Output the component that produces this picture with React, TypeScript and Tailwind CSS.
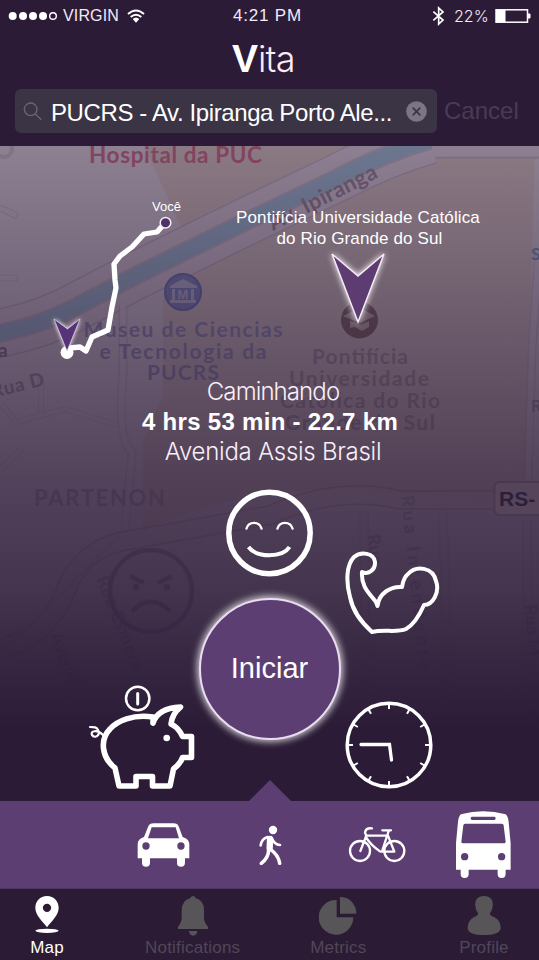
import React from "react";

const LIGHT = "font-['Inter','Liberation_Sans',sans-serif] font-light";

function StatusBar() {
  return (
    <div className="flex h-[31px] items-center px-2 text-[16px] leading-none text-[#f3e9f7]">
      <div className="flex w-[225px] items-center">
        <svg width="50" height="10" viewBox="0 0 50 10" fill="#fff">
          <circle cx="4.7" cy="5" r="4" />
          <circle cx="15" cy="5" r="4" />
          <circle cx="25" cy="5" r="4" />
          <circle cx="35" cy="5" r="4" />
          <circle cx="45" cy="5" r="3.3" fill="none" stroke="#fff" strokeWidth="1.4" />
        </svg>
        <span className="ml-[5px] w-[57px] whitespace-nowrap text-[16px] tracking-[0.15px]">VIRGIN</span>
        <svg className="ml-[7px]" width="18" height="14" viewBox="0 0 54 42" fill="none" stroke="#fff" strokeWidth="6">
          <path d="M3 15Q27 -6 51 15" />
          <path d="M11 24Q27 10 43 24" />
          <path d="M17 30Q27 21 37 30L27 41Z" fill="#fff" stroke="none" />
        </svg>
      </div>
      <span className="w-[72px] whitespace-nowrap text-[17px] tracking-[0.8px]">4:21 PM</span>
      <div className="ml-auto flex items-center">
        <svg width="13" height="20" viewBox="0 0 39 60" fill="none" stroke="#fff" strokeWidth="5">
          <path d="M4 17L33 42L20 54V6L33 18L4 43" />
        </svg>
        <span className={`ml-[9px] w-[35px] whitespace-nowrap text-[16px] ${LIGHT}`}>22%</span>
        <svg className="ml-[6px]" width="36" height="14" viewBox="0 0 36 14">
          <rect x="1" y="0.8" width="31.5" height="12.4" fill="none" stroke="#fff" strokeWidth="1.5" />
          <rect x="1" y="1" width="9.5" height="12" fill="#fff" />
          <path d="M33 4.5h1.5q1 0 1 1v3q0 1-1 1H33z" fill="#fff" />
        </svg>
      </div>
    </div>
  );
}

function Header() {
  return (
    <header className="h-[146px] shrink-0 bg-[#2b1b36]">
      <StatusBar />
      <h1 className={`flex h-[58px] items-center justify-center pr-[12px] pb-[3px] leading-none text-[#fbe9fb] ${LIGHT}`}>
        <span className="font-['Liberation_Sans',sans-serif] text-[39px] font-bold text-white">V</span>
        <span className="w-[37px] text-[36px] tracking-[-0.8px]">ita</span>
      </h1>
      <div className="flex items-center pl-[15px]">
        <div className="flex h-[44px] w-[422px] items-center rounded-[6px] bg-[#3a3445] pr-[10px] pl-[8px]">
          <svg width="20" height="20" viewBox="0 0 60 60" fill="none" stroke="#6b6376" strokeWidth="4">
            <circle cx="23" cy="25" r="19" />
            <path d="M37 39L55 56" />
          </svg>
          <span className="ml-[8px] w-[345px] whitespace-nowrap pt-[4px] text-[24px] tracking-[-0.39px] text-white">
            PUCRS - Av. Ipiranga Porto Ale...
          </span>
          <svg className="ml-auto" width="21" height="21" viewBox="0 0 21 21">
            <circle cx="10.5" cy="10.5" r="10.3" fill="#7b7683" />
            <path d="M6.7 6.7l7.6 7.6M14.3 6.7l-7.6 7.6" stroke="#3a3445" strokeWidth="1.7" />
          </svg>
        </div>
        <span className="ml-[7px] text-[24px] text-[#493b55]">Cancel</span>
      </div>
    </header>
  );
}

const RIVER = "M-5 334Q45 325 83 303L133 277L247 221L337 178Q385 153 430 140";

function MapBackdrop() {
  return (
    <svg
      className="absolute inset-0 h-full w-full"
      viewBox="0 146 539 655"
      fontFamily="'Lato','Liberation Sans',sans-serif"
      fontWeight="700"
    >
      <defs>
        <linearGradient id="shade" x1="0" y1="0" x2="0" y2="1">
          <stop offset="0" stopColor="#2c1b38" stopOpacity="0.49" />
          <stop offset="0.18" stopColor="#2c1b38" stopOpacity="0.6" />
          <stop offset="0.36" stopColor="#2c1b38" stopOpacity="0.71" />
          <stop offset="0.51" stopColor="#2c1b38" stopOpacity="0.8" />
          <stop offset="0.68" stopColor="#2c1b38" stopOpacity="0.875" />
          <stop offset="0.77" stopColor="#2b1b37" stopOpacity="0.93" />
          <stop offset="0.89" stopColor="#2b1b36" stopOpacity="1" />
        </linearGradient>
      </defs>
      <rect y="146" width="539" height="655" fill="#ebe2e8" />
      <path d="M144 146H539V505Q450 495 350 490T143 530V440L163 395V300L184 234Z" fill="#e6d5cc" />
      <path d="M535 146L525 500H539V146Z" fill="#ebe2e6" />
      <g fill="none">
        <path d="M400 158Q420 152 450 152H545" stroke="#cfc0cc" strokeWidth="13" />
        <path d={RIVER} stroke="#cfc0cc" strokeWidth="49" />
        <path d="M400 156Q420 151 450 151H545" stroke="#ebdfe8" strokeWidth="11" />
        <path d={RIVER} stroke="#ebdfe8" strokeWidth="46" />
        <path d={RIVER} stroke="#d2c7d2" strokeWidth="19" />
        <path d={RIVER} stroke="#a9cfe2" strokeWidth="15" />
        <g opacity="0.65">
          <path d="M539 250L532 350L527 510M123 305V375Q117 440 132 452L125 530" stroke="#cfc0cc" strokeWidth="9" />
          <path d="M539 250L532 350L527 510M123 305V375Q117 440 132 452L125 530" stroke="#efe5ec" strokeWidth="6" />
          <path d="M0 402L16 422L65 409L117 425M41 375V416M0 470L22 448" stroke="#cdbfcd" strokeWidth="6" />
          <path d="M0 402L16 422L65 409L117 425M41 375V416M0 470L22 448" stroke="#ece2e9" strokeWidth="4" />
          <path d="M0 208L15 215M0 278H15" stroke="#cbbccb" strokeWidth="7" strokeLinecap="round" />
          <path d="M0 208L15 215M0 278H15" stroke="#e9dfe8" strokeWidth="5" strokeLinecap="round" />
          <circle cx="4" cy="149" r="8" stroke="#cbbccb" strokeWidth="4" />
        </g>
        <g opacity="0.4">
          <path d="M-5 650Q50 640 70 580Q90 545 130 540L270 515Q340 485 400 500H500" stroke="#b8807f" strokeWidth="20" />
          <path d="M-5 650Q50 640 70 580Q90 545 130 540L270 515Q340 485 400 500H500" stroke="#ecd6d2" strokeWidth="17" />
          <path d="M364 510L366 700M443 510L448 700M527 510V760" stroke="#c4b4c4" strokeWidth="10" />
          <path d="M364 510L366 700M443 510L448 700M527 510V760" stroke="#e7dde5" strokeWidth="7" />
          <path d="M0 655L70 585L120 535M50 630L70 700" stroke="#cbb9c4" strokeWidth="3" />
        </g>
      </g>
      <circle cx="183" cy="292" r="18" fill="#8292cd" stroke="#6a7bc0" strokeWidth="2" />
      <g fill="#cbcde6">
        <path d="M170 286L183 279L197 286V288H170ZM170 300H196V303H170ZM172 289H175V300H172ZM191 289H194V300H191Z" />
      </g>
      <text x="177.5" y="299" fontSize="13" fill="#cbcde6" fontFamily="'Liberation Sans',sans-serif">M</text>
      <circle cx="359.500" cy="320" r="18.5" fill="#866b60" />
      <path d="M343 316L360 308L375 316L360 323ZM350 321V328L355 327L362 331L369 327V321L361 325Z" fill="#d6beb9" />
      <text x="89" y="163" fontSize="22.500" textLength="173" fill="#d86c84">Hospital da PUC</text>
      <g fontSize="21" fill="#9a9bc4" textAnchor="middle">
        <text x="183" y="337" textLength="199">Museu de Ciencias</text>
        <text x="183" y="359" textLength="167">e Tecnologia da</text>
        <text x="183" y="380" textLength="72">PUCRS</text>
      </g>
      <g fontSize="21" fill="#b2a0a5" textAnchor="middle">
        <text x="360" y="364" textLength="96">Pontifícia</text>
        <text x="359" y="386" textLength="140">Universidade</text>
        <text x="360" y="408" textLength="160">Católica do Rio</text>
        <text x="360" y="430" textLength="150">Grande do Sul</text>
      </g>
      <text transform="translate(273 231) rotate(-27)" fontSize="22" textLength="119" fill="#a08e9a">Av. Ipiranga</text>
      <text x="-2" y="357" fontSize="19" fill="#8e7b88">a</text>
      <text transform="translate(-7 398) rotate(-14)" fontSize="19" textLength="54" fill="#a99aa5">Rua D</text>
      <text x="34" y="506" fontSize="22" textLength="131" fill="#bcadbb">PARTENON</text>
      <text x="531" y="412" fontSize="17" fill="#a99aa5">R</text>
      <text x="531" y="260" fontSize="17" fill="#7fa3c4">S</text>
      <g fill="#c2b4c1" fontSize="18">
        <text transform="translate(401 496) rotate(84)" textLength="175">Rua Intendente</text>
        <text transform="translate(367 535) rotate(82)">Rua</text>
        <text transform="translate(96 579) rotate(68)" textLength="100">Rua Esmera</text>
        <text transform="translate(50 635) rotate(68)">Avenida</text>
        <text transform="translate(524 605) rotate(84)">Rua M</text>
      </g>
      <g fill="none" stroke="#b3a4b6" strokeWidth="4.500">
        <circle cx="151" cy="591" r="41" />
        <path d="M130 576L144 583M172 576L158 583M132 611Q151 592 170 611" />
      </g>
      <circle cx="136" cy="587" r="3.2" fill="#b3a4b6" />
      <circle cx="167" cy="587" r="3.2" fill="#b3a4b6" />
      <rect y="146" width="539" height="655" fill="url(#shade)" />
      <rect x="494.500" y="482" width="60" height="33" rx="5" fill="#56445b" stroke="#4a3850" strokeWidth="2" />
      <text x="499" y="506" fontSize="21" fill="#2c1f38" fontFamily="'Liberation Sans',sans-serif">RS-</text>
    </svg>
  );
}

function Route() {
  return (
    <div className="w-[200px] pt-[54px]">
      <p className="w-full pl-[152px] text-[13px] leading-[14px] text-white">Você</p>
      <svg className="ml-[45px]" width="135" height="150" viewBox="45 214 135 150">
        <path
          d="M165 223L157 232L144 234L132 247L120 256L114 264L115 280L116 288L112 307L108 330L92 337L86 351L80 347L70 348L66 352"
          fill="none"
          stroke="#fff"
          strokeWidth="5.3"
          strokeLinejoin="round"
        />
        <circle cx="165.500" cy="222.700" r="5.300" fill="#50326b" stroke="#f7edf9" strokeWidth="1.5" />
        <circle cx="67" cy="352.500" r="6.500" fill="#fff" />
        <path
          className="drop-shadow-[0_0_2px_white]"
          d="M54 319L67.500 329L80 319L67 351Z"
          fill="#563377"
          stroke="#f2e7f5"
          strokeWidth="0.600"
        />
      </svg>
    </div>
  );
}

function Destination() {
  return (
    <div className="flex w-[316px] flex-col items-center pt-[61px]">
      <p className="whitespace-nowrap text-center text-[17px] leading-[21px] tracking-[0.12px] text-white">
        Pontifícia Universidade Católica
        <br />
        <span className="pl-[3px]">do Rio Grande do Sul</span>
      </p>
      <svg width="64" height="80" viewBox="326 249 64 80">
        <path
          className="drop-shadow-[0_0_3px_white]"
          d="M332 254L358 276L384 254L358 322Z"
          fill="#5d3c72"
          stroke="#f6eaf7"
          strokeWidth="1.500"
        />
      </svg>
    </div>
  );
}

function Smile() {
  return (
    <svg width="88" height="88" viewBox="-43.5 -44 88 88" fill="none" stroke="#fff" strokeLinecap="round">
      <circle r="40.700" strokeWidth="5.500" />
      <path d="M-23 -4.500C-21 -12 -10 -12 -8 -4.500M8 -4.500C10 -12 21 -12 23 -4.500" strokeWidth="2.400" />
      <path d="M-21 14C-13 25 13 25 20 14" strokeWidth="4" strokeLinecap="butt" />
    </svg>
  );
}

function Arm() {
  return (
    <svg width="96" height="88" viewBox="344 549 96 88" fill="none" stroke="#fff" strokeWidth="4" strokeLinejoin="round">
      <path d="M362 572C368 575 375.500 570 375 562C374 553 361 551 354 557C346 565 346 583 350 597C353 612 361 622 372 632C384 629 397 633 406 629C415 624 420 614 424 605C433 605 440 592 436 581C433 567 416 565 408 574C403 578 403 583 402 587C391 586 379 593 377.500 606L376 602C368 592 361 586 362 572Z" />
    </svg>
  );
}

function Piggy() {
  return (
    <svg width="108" height="108" viewBox="88 684 108 108" fill="none" stroke="#fff" strokeLinejoin="round" strokeLinecap="round">
      <circle cx="137.700" cy="698.500" r="11.700" strokeWidth="2.500" />
      <path d="M137.700 693.500V704" strokeWidth="3" />
      <path
        d="M153 723V717C133 714 117 721 110 729C100 739 101 757 115 768L119 786H136V776.500H152.500V786H170L173.500 769Q181 763 182.500 757.500H191.500V736.500H182.500Q179 728 171 724Q172 714 180.500 707Q158 708 153 723"
        strokeWidth="5.600"
      />
      <circle cx="166.700" cy="738" r="3.300" fill="#fff" stroke="none" />
      <path d="M103 735C97 729 90 731 92 735C95 739 101 735 98 730C97 727 94 727 90 727" strokeWidth="2.200" />
    </svg>
  );
}

const TICKS = [0, 30, 60, 90, 120, 150, 180, 210, 240, 270, 300, 330];

function Clock() {
  return (
    <svg width="90" height="90" viewBox="-45 -45 90 90" fill="none" stroke="#fff">
      <circle r="41.800" strokeWidth="3.500" />
      {TICKS.map((a) => (
        <path key={a} d="M0 -41V-36" strokeWidth="2" transform={`rotate(${a})`} />
      ))}
      <path d="M-28 -0.500H0.500L2.500 15" strokeWidth="3.300" strokeLinecap="round" />
    </svg>
  );
}

function Dial() {
  return (
    <div className="flex flex-1">
      <div className="w-[198px] pt-[217px] pl-[88px]">
        <Piggy />
      </div>
      <div className="flex w-[143px] flex-col items-center pt-[22px]">
        <Smile />
        <button className="mt-[21px] size-[142px] shrink-0 rounded-full border-2 border-[#eadcf0] bg-[#5d3e73] text-[29px] text-white shadow-[0_0_7px_2px_rgba(255,255,255,0.75)]">
          Iniciar
        </button>
        <div className="mt-auto border-x-[21.5px] border-b-[21px] border-x-transparent border-b-[#5d3e73]" />
      </div>
      <div className="flex flex-col gap-[63px] pt-[82px] pl-[3px]">
        <Arm />
        <Clock />
      </div>
    </div>
  );
}

function Stage() {
  return (
    <main className="relative flex h-[655px] shrink-0 flex-col">
      <MapBackdrop />
      <div className="relative flex flex-1 flex-col">
        <div className="flex h-[231px]">
          <Route />
          <Destination />
        </div>
        <div className="flex h-[90px] flex-col items-center whitespace-nowrap text-[24px] leading-[30px] text-[#f8effa]">
          <p className={`pl-[7px] tracking-[-0.9px] ${LIGHT}`}>Caminhando</p>
          <p className="pl-[1px] font-bold tracking-[0.3px] text-white">4 hrs 53 min - 22.7 km</p>
          <p className={`pl-[7px] tracking-[-0.28px] ${LIGHT}`}>Avenida Assis Brasil</p>
        </div>
        <Dial />
      </div>
    </main>
  );
}

function ModeBar() {
  return (
    <div className="grid h-[88px] shrink-0 grid-cols-5 place-items-center border-b border-[#4c3560] bg-[#5d3e73]">
      <span />
      <svg className="ml-[3px]" width="53.300" height="45" viewBox="110 155 160 135" fill="#fff">
        <path
          fillRule="evenodd"
          d="M160 159H220Q232 159 235 168L247 200Q267 206 267 222V264H254V277Q254 289 242 289Q230 289 230 277V264H149V277Q149 289 137 289Q125 289 125 277V264H112V222Q112 206 131 200L144 168Q147 159 160 159ZM154 171L143 204H236L226 171ZM137 216A11 11 0 1 0 137 238A11 11 0 1 0 137 216ZM242 216A11 11 0 1 0 242 238A11 11 0 1 0 242 216Z"
        />
      </svg>
      <svg className="ml-[2px]" width="26.700" height="41.700" viewBox="470 160 80 125" fill="none" stroke="#fff" strokeLinecap="round" strokeLinejoin="round">
        <circle cx="518" cy="178" r="12.500" fill="#fff" stroke="none" />
        <path d="M509 205L508 232" strokeWidth="19" />
        <path d="M502 199Q484 204 481 224M514 202Q522 222 539 223" strokeWidth="8" />
        <path d="M505 236Q505 262 483 278M510 236Q534 252 538 278" strokeWidth="10.500" />
      </svg>
      <svg width="60" height="38.300" viewBox="80 135 180 115" fill="none" stroke="#fff" strokeWidth="7" strokeLinecap="round" strokeLinejoin="round">
        <circle cx="119" cy="213" r="30" />
        <circle cx="222" cy="213" r="30" />
        <path d="M155 145Q136 143 134 158L138 167L120 213M138 167H202M136 170Q150 195 180 215M205 153L185 215H222L203 167M186 151H212" />
      </svg>
      <svg className="mr-[3px]" width="58.300" height="70" viewBox="403 90 175 210" fill="#fff">
        <path
          fillRule="evenodd"
          d="M424 103Q491 84 558 103Q565 108 567 125L573 190V269H558V282Q558 294 546 294Q534 294 534 282V269H447V282Q447 294 435 294Q423 294 423 282V269H409V190L415 125Q417 108 424 103ZM457 110Q453 110 453 115Q453 120 457 120H524Q528 120 528 115Q528 110 524 110ZM436 131Q432 131 431 136L425 185Q425 190 430 190H553Q558 190 558 185L552 136Q551 131 547 131ZM435 219A11 11 0 1 0 435 241A11 11 0 1 0 435 219ZM546 219A11 11 0 1 0 546 241A11 11 0 1 0 546 219Z"
        />
      </svg>
    </div>
  );
}

function Tab({ label, active, children }: { label: string; active?: boolean; children: React.ReactNode }) {
  return (
    <div className={`flex w-[94px] flex-col items-center pt-[7px] ${active ? "text-white" : "text-[#514758]"}`}>
      {children}
      <span className="mt-[2px] whitespace-nowrap text-[17px] leading-[20px] tracking-[0.2px]">{label}</span>
    </div>
  );
}

function TabBar() {
  return (
    <nav className="flex h-[71px] shrink-0 justify-between bg-[#2b1b35] pr-2">
      <Tab label="Map" active>
        <svg width="26" height="40" viewBox="104 48 78 120" fill="#fff">
          <path fillRule="evenodd" d="M143 48C164 48 178 64 178 84C178 105 158 122 143 142C128 122 108 105 108 84C108 64 122 48 143 48ZM143 71A12.500 12.500 0 1 0 143 96A12.500 12.500 0 1 0 143 71Z" />
          <ellipse cx="143" cy="152.500" rx="35" ry="6.500" />
        </svg>
      </Tab>
      <Tab label="Notifications">
        <svg width="32" height="40" viewBox="531 48 96 120" fill="#575558">
          <path d="M570 55Q579 41 588 55Q612 62 612 90V115Q612 128 624 140V147H534V140Q545 128 545 115V90Q546 62 570 55ZM567 153H592Q590 167 579 167Q569 167 567 153Z" />
        </svg>
      </Tab>
      <Tab label="Metrics">
        <svg width="38" height="40" viewBox="149 48 114 120" fill="#575558">
          <path d="M202 60A52 52 0 1 0 252 112H202ZM212 50A50 50 0 0 1 261 101H212Z" />
        </svg>
      </Tab>
      <Tab label="Profile">
        <svg width="34" height="40" viewBox="591 48 102 120" fill="#575558">
          <path d="M642 48C662 48 670 61 668 78C667 88 664 95 660 99Q658 105 666 109C684 115 692 127 692 146C689 159 670 165 642 165C614 165 595 159 593 146C593 127 602 115 618 109Q626 105 624 99C620 95 617 88 616 78C614 61 622 48 642 48Z" />
        </svg>
      </Tab>
    </nav>
  );
}

export default function App() {
  return (
    <div className="flex h-[960px] w-[539px] flex-col overflow-hidden bg-[#2b1b36] font-['Liberation_Sans',Arial,sans-serif]">
      <Header />
      <Stage />
      <ModeBar />
      <TabBar />
    </div>
  );
}
